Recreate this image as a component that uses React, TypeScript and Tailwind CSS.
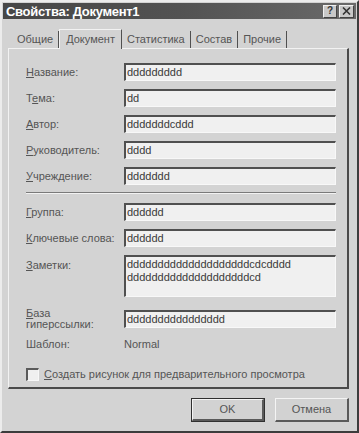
import React from "react";

const Label = ({ text, u }: { text: string; u: number }) => (
    <span>
        {text.slice(0, u)}
        <span className="underline">{text[u]}</span>
        {text.slice(u + 1)}
    </span>
);

const Box = ({ children, tall }: { children: React.ReactNode; tall?: boolean }) => (
    <div
        className={`w-[212px] ${tall ? "h-[42px]" : "h-[18px]"} bg-[#f0f0f0] border-t-2 border-l-2 border-t-[#505050] border-l-[#505050] border-r border-b border-r-[#f8f8f8] border-b-[#f8f8f8] px-[1px] pt-[1px] text-[11px] leading-[13px] text-[#3a3a3a] overflow-hidden whitespace-pre`}
    >
        {children}
    </div>
);

const Row = ({ label, u, value }: { label: string; u: number; value: string }) => (
    <div className="flex items-center h-[18px]">
        <div className="w-[98px] text-[11px] text-[#555]">
            <Label text={label} u={u} />
        </div>
        <Box>{value}</Box>
    </div>
);

const Btn = ({ children, def }: { children: React.ReactNode; def?: boolean }) => (
    <div className={`w-[74px] h-[24px] ${def ? "border border-[#303030]" : ""}`}>
        <div className="w-full h-full flex items-center justify-center bg-[#d2d2d2] border-t border-l border-t-[#f4f4f4] border-l-[#f4f4f4] border-r-2 border-b-2 border-r-[#5a5a5a] border-b-[#5a5a5a] text-[11px] text-[#555]">
            {children}
        </div>
    </div>
);

export default function App() {
    const tabs = ["Общие", "Документ", "Статистика", "Состав", "Прочие"];

    return (
        <div className="w-[359px] h-[433px] bg-[#d3d3d3] font-['Liberation_Sans',Arial,sans-serif] border-2 border-t-[#ececec] border-l-[#ececec] border-r-[#3c3c3c] border-b-[#3c3c3c] overflow-hidden">
            {/* title bar */}
            <div className="mx-[1px] mt-[1px] h-[16px] flex items-center bg-gradient-to-r from-[#474747] via-[#525252] to-[#6a6a6a] pl-[3px] pr-[2px]">
                <div className="flex-1 text-white text-[13px] font-bold leading-none tracking-[-0.3px]">
                    Свойства: Документ1
                </div>
                <div className="flex gap-[2px]">
                    <div className="w-[14px] h-[13px] bg-[#c8c8c8] border-t border-l border-t-[#f0f0f0] border-l-[#f0f0f0] border-r border-b border-r-[#444] border-b-[#444] flex items-center justify-center text-[10px] font-bold text-[#333] leading-none">
                        ?
                    </div>
                    <div className="w-[15px] h-[13px] bg-[#c8c8c8] border-t border-l border-t-[#f0f0f0] border-l-[#f0f0f0] border-r border-b border-r-[#444] border-b-[#444] flex items-center justify-center">
                        <svg width="9" height="8" viewBox="0 0 9 8">
                            <path d="M1 0.5 L8 7.5 M8 0.5 L1 7.5" stroke="#333" strokeWidth="1.6" />
                        </svg>
                    </div>
                </div>
            </div>

            {/* tabs */}
            <div className="flex items-end ml-[6px] mt-[9px] h-[20px]">
                {tabs.map((t, i) => {
                    const sel = i === 1;
                    return (
                        <div
                            key={t}
                            className={`${sel ? "h-[20px] bg-[#d3d3d3] border-t border-l border-t-[#f2f2f2] border-l-[#f2f2f2] -mb-[1px] relative z-10 px-[6px]" : "h-[17px] px-[5px]"} border-r border-r-[#505050] flex items-center text-[11px] text-[#555] ${i === 0 ? "pl-[9px]" : ""}`}
                        >
                            {t}
                        </div>
                    );
                })}
            </div>

            {/* panel */}
            <div className="ml-[6px] w-[341px] h-[341px] border-t border-l border-t-[#f2f2f2] border-l-[#f2f2f2] border-r-2 border-b-2 border-r-[#4a4a4a] border-b-[#4a4a4a] pl-[17px] pt-[14px]">
                <div className="flex flex-col gap-[8px]">
                    <Row label="Название:" u={0} value="ddddddddd" />
                    <Row label="Тема:" u={1} value="dd" />
                    <Row label="Автор:" u={0} value="dddddddcddd" />
                    <Row label="Руководитель:" u={0} value="dddd" />
                    <Row label="Учреждение:" u={0} value="ddddddd" />
                </div>

                <div className="mt-[7px] w-[310px] border-t border-t-[#7a7a7a] border-b border-b-[#f2f2f2]" />

                <div className="mt-[9px] flex flex-col gap-[8px]">
                    <Row label="Группа:" u={0} value="dddddd" />
                    <Row label="Ключевые слова:" u={0} value="dddddd" />
                    <div className="flex items-start">
                        <div className="w-[98px] text-[11px] text-[#555] pt-[2px]">
                            <Label text="Заметки:" u={0} />
                        </div>
                        <Box tall>{"ddddddddddddddddddddcdcdddd\nddddddddddddddddddddcd"}</Box>
                    </div>
                </div>

                <div className="mt-[11px] flex items-center">
                    <div className="w-[98px] text-[11px] leading-[11px] text-[#555]">
                        <Label text="База" u={0} />
                        <div>гиперссылки:</div>
                    </div>
                    <Box>dddddddddddddddd</Box>
                </div>

                <div className="mt-[7px] flex items-center h-[14px] text-[11px] text-[#555]">
                    <div className="w-[98px]">Шаблон:</div>
                    <div>Normal</div>
                </div>

                <div className="mt-[17px] flex items-center h-[13px] text-[11px] text-[#555]">
                    <div className="w-[13px] h-[13px] bg-[#f0f0f0] border-t-2 border-l-2 border-t-[#5a5a5a] border-l-[#5a5a5a] border-r border-b border-r-[#f8f8f8] border-b-[#f8f8f8]" />
                    <div className="ml-[5px]">
                        <Label text="Создать рисунок для предварительного просмотра" u={0} />
                    </div>
                </div>
            </div>

            {/* buttons */}
            <div className="flex justify-end gap-[10px] mt-[9px] pr-[8px]">
                <Btn def>OK</Btn>
                <Btn>Отмена</Btn>
            </div>
        </div>
    );
}
